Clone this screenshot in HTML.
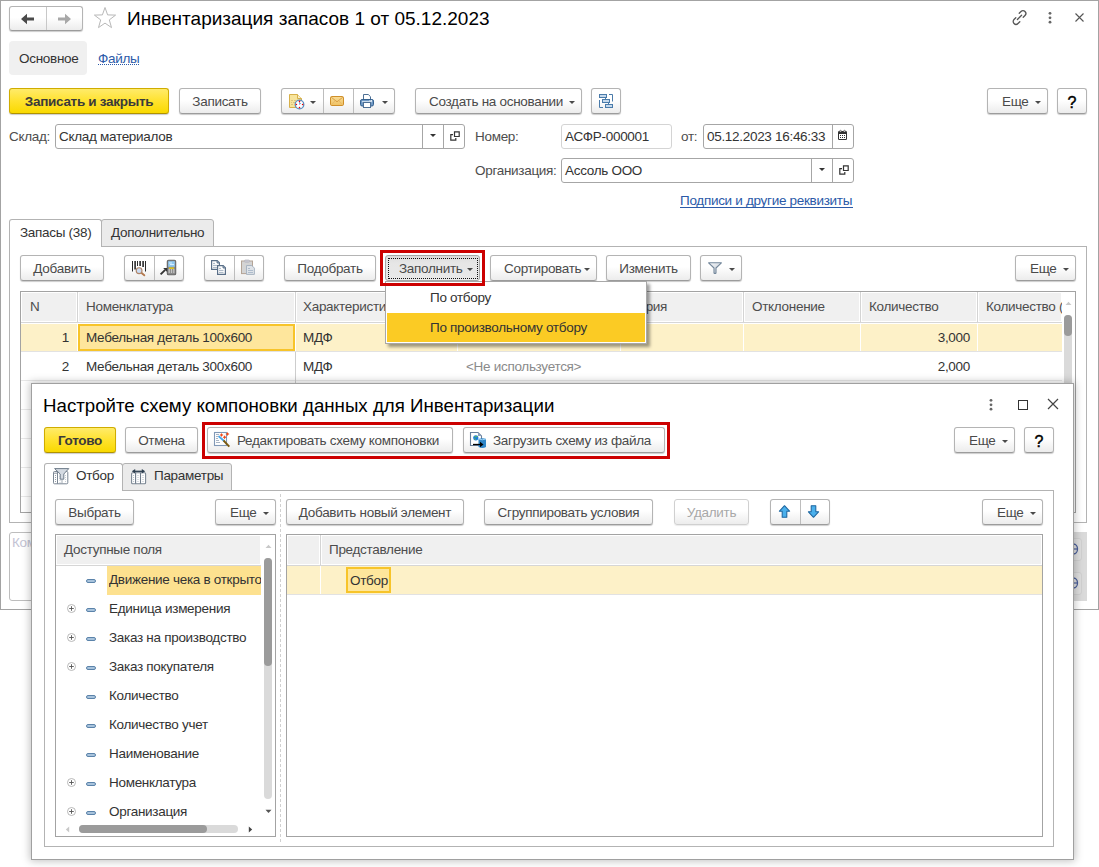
<!DOCTYPE html>
<html><head><meta charset="utf-8">
<style>
html,body{margin:0;padding:0}
body{width:1099px;height:867px;position:relative;overflow:hidden;background:#fff;font-family:"Liberation Sans",sans-serif;font-size:13.5px;letter-spacing:-0.3px;color:#4d4d4d}
.a{position:absolute}
svg.a{overflow:visible}
.t{position:absolute;white-space:nowrap;line-height:16px}
.btn{position:absolute;box-sizing:border-box;height:26px;border:1px solid #b4b4b4;border-bottom-color:#9c9c9c;border-radius:3px;background:linear-gradient(#fff 0%,#fff 45%,#ececec 100%);box-shadow:0 1px 1px rgba(0,0,0,.2);color:#4a4a4a;white-space:nowrap;line-height:25px;text-align:center}
.btn.y{background:linear-gradient(#ffeb6a 0%,#ffe22e 50%,#f9d900 100%);border-color:#cfac00;border-bottom-color:#b09200;color:#3a3a3a;font-weight:bold;letter-spacing:-0.3px}
.btn.dis{color:#a8a8a8}
.btn.l{text-align:left}
.dd{position:absolute;top:12px;width:0;height:0;border-left:3px solid transparent;border-right:3px solid transparent;border-top:3.5px solid #4a4a4a}
.sep{position:absolute;top:0;bottom:0;width:1px;background:#bdbdbd}
.inp{position:absolute;box-sizing:border-box;height:25px;border:1px solid #a6a6a6;border-radius:3px;background:#fff;color:#333;line-height:23px;white-space:nowrap}
.isep{position:absolute;top:0;bottom:0;width:1px;background:#a6a6a6}
.vl{position:absolute;width:1px}
.hl{position:absolute;height:1px}
.redbox{position:absolute;box-sizing:border-box;border:3px solid #cc0000}
.dash{width:10px;height:4px;box-sizing:border-box;border:1px solid #5b83aa;border-radius:2px;background:#a8c3dc}
</style></head><body>

<!-- OUTER WINDOW -->
<div class="a" style="left:0;top:0;width:1099px;height:610px;box-sizing:border-box;border:1px solid #a3a3a3"></div>

<!-- nav buttons -->
<div class="btn" style="left:9px;top:6px;width:74px;height:25px"><div class="sep" style="left:36px;background:#c8c8c8"></div></div>
<svg class="a" style="left:20px;top:13px" width="16" height="12" viewBox="0 0 16 12"><path d="M1 6 L7 0.7 V4.6 H14 V7.4 H7 V11.3 Z" fill="#4a4a4a"/></svg>
<svg class="a" style="left:56px;top:13px" width="16" height="12" viewBox="0 0 16 12"><path d="M15 6 L9 0.7 V4.6 H2 V7.4 H9 V11.3 Z" fill="#a8a8a8"/></svg>
<!-- star -->
<svg class="a" style="left:93px;top:6px" width="24" height="24" viewBox="0 0 24 24"><path d="M12 1.5 L14.6 8.9 L22.6 9.1 L16.3 13.9 L18.5 21.6 L12 17.1 L5.5 21.6 L7.7 13.9 L1.4 9.1 L9.4 8.9 Z" fill="none" stroke="#b8b8b8" stroke-width="1"/></svg>
<div class="t" style="left:127px;top:7.5px;font-size:19px;line-height:22px;color:#000;letter-spacing:0">Инвентаризация запасов 1 от 05.12.2023</div>
<!-- link icon -->
<svg class="a" style="left:1011px;top:9px" width="18" height="17" viewBox="0 0 18 17"><g fill="none" stroke="#555" stroke-width="1.3" stroke-linecap="round"><path d="M6.4 10.5 L10.6 6.3"/><path d="M8.2 4.3 L10 2.5 A2.8 2.8 0 0 1 14 6.5 L12.2 8.3"/><path d="M8.8 12.7 L7 14.5 A2.8 2.8 0 0 1 3 10.5 L4.8 8.7"/></g></svg>
<svg class="a" style="left:1047px;top:11px" width="6" height="13" viewBox="0 0 6 13"><circle cx="3" cy="2.3" r="1.4" fill="#666"/><circle cx="3" cy="6.8" r="1.4" fill="#666"/><circle cx="3" cy="11.2" r="1.4" fill="#666"/></svg>
<svg class="a" style="left:1074px;top:12px" width="11" height="11" viewBox="0 0 11 11"><path d="M1.5 1.5 L9.5 9.5 M9.5 1.5 L1.5 9.5" stroke="#555" stroke-width="1.1"/></svg>

<!-- Section tabs -->
<div class="a" style="left:9px;top:41px;width:78px;height:34px;background:#f0f0f0;border-radius:4px"></div>
<div class="t" style="left:19px;top:51px;color:#333">Основное</div>
<div class="t" style="left:98px;top:50.5px;color:#2b5aa8">Файлы</div>
<div class="a" style="left:98px;top:64px;width:41px;height:0;border-top:1px dotted #2b5aa8"></div>

<!-- Command bar -->
<div class="btn y" style="left:9px;top:88px;width:160px">Записать и закрыть</div>
<div class="btn" style="left:179px;top:88px;width:82px">Записать</div>
<div class="btn" style="left:281px;top:88px;width:114px"><div class="sep" style="left:41px"></div><div class="sep" style="left:71px"></div>
 <div class="dd" style="left:28px"></div><div class="dd" style="left:100px"></div></div>
<!-- doc+clock icon -->
<svg class="a" style="left:289px;top:94px" width="16" height="16" viewBox="0 0 16 16">
 <path d="M0.5 0.5 H8.5 L12.5 4.5 V13.5 H0.5 Z" fill="#f7e49c" stroke="#d7b04a"/>
 <path d="M8.5 0.5 V4.5 H12.5" fill="#fbf0c8" stroke="#d7b04a"/>
 <path d="M2 6.5 H4 M5 6.5 H7 M2 8.5 H3 M4 8.5 H6 M2 10.5 H4" stroke="#dcc47e"/>
 <circle cx="10.5" cy="10.5" r="4.3" fill="#fff" stroke="#5b8fc0" stroke-width="1.3"/>
 <path d="M10.5 10.5 V8 M10.5 10.5 L12 9" stroke="#7aa6d6" stroke-width="0.9"/>
 <circle cx="10.5" cy="7.4" r="0.8" fill="#e00"/><circle cx="10.5" cy="13.6" r="0.8" fill="#e00"/><circle cx="7.4" cy="10.5" r="0.8" fill="#e00"/><circle cx="13.6" cy="10.5" r="0.8" fill="#e00"/>
</svg>
<!-- envelope -->
<svg class="a" style="left:330px;top:96px" width="14" height="10" viewBox="0 0 14 10"><defs><linearGradient id="env" x1="0" y1="0" x2="0" y2="1"><stop offset="0" stop-color="#f9dc96"/><stop offset="1" stop-color="#f0c263"/></linearGradient></defs>
 <rect x="0.5" y="0.5" width="13" height="9" rx="1.2" fill="url(#env)" stroke="#cf8f2a"/><path d="M1.2 1.2 L7 5.8 L12.8 1.2" fill="none" stroke="#d59a3c" stroke-width="0.9"/><path d="M1.5 8.8 L5.3 4.6 M12.5 8.8 L8.7 4.6" stroke="#e6b565" stroke-width="0.8"/></svg>
<!-- printer -->
<svg class="a" style="left:360px;top:94px" width="15" height="15" viewBox="0 0 15 15">
 <path d="M3.5 0.5 H8.3 L10.5 2.7 V6 H3.5 Z" fill="#fff" stroke="#4d6f94"/>
 <rect x="0.5" y="5.5" width="13" height="6.5" rx="1.6" fill="#6f98c4" stroke="#34618f"/>
 <rect x="2" y="7" width="10" height="1.2" fill="#c9daea"/>
 <rect x="3.5" y="8.5" width="7" height="5" fill="#fff" stroke="#4d6f94"/>
 <rect x="9.5" y="6.2" width="1" height="1" fill="#fff"/><rect x="11" y="6.2" width="1" height="1" fill="#fff"/>
</svg>
<div class="btn l" style="left:415px;top:88px;width:167px;padding-left:13px">Создать на основании<div class="dd" style="left:153px"></div></div>
<div class="btn" style="left:591px;top:88px;width:30px"></div>
<svg class="a" style="left:599px;top:94px" width="14" height="14" viewBox="0 0 14 14"><g stroke="#4a7baa" stroke-width="1" fill="#c6d9ec">
 <rect x="0.5" y="0.5" width="7" height="3"/><rect x="3.5" y="5.5" width="7" height="3"/><rect x="6.5" y="10.5" width="7" height="3"/></g>
 <g stroke="#4a7baa" stroke-width="1" fill="none"><path d="M6.5 4 V5 M9.5 9 V10"/><path d="M10 0.5 H13.5 V7.5"/><path d="M0.5 6 V13.5 H4"/></g></svg>
<div class="btn l" style="left:987px;top:88px;width:61px;padding-left:14px">Еще<div class="dd" style="left:47px"></div></div>
<div class="btn" style="left:1057px;top:88px;width:30px;color:#000;font-size:16px;line-height:27px;letter-spacing:0;-webkit-text-stroke:0.45px #000">?</div>

<!-- Form fields -->
<div class="t" style="left:9px;top:128.5px">Склад:</div>
<div class="inp" style="left:55px;top:124px;width:410px"><span class="t" style="left:3px;top:4px">Склад материалов</span><div class="isep" style="left:366px"></div><div class="isep" style="left:387px"></div>
 <div class="dd" style="left:374px;top:9px;border-top-color:#333"></div>
 <svg class="a" style="left:394px;top:6px" width="10" height="10" viewBox="0 0 10 10"><path d="M4.5 0.8 H9.2 V5.5 H4.5 Z" fill="none" stroke="#333" stroke-width="1.2"/><path d="M3 3.6 H0.8 V9.2 H5.8 V7" fill="none" stroke="#333" stroke-width="1.2"/></svg>
</div>
<div class="t" style="left:475px;top:128.5px">Номер:</div>
<div class="inp" style="left:561px;top:124px;width:111px;border-color:#d4d4d4"><span class="t" style="left:3px;top:4px">АСФР-000001</span></div>
<div class="t" style="left:681px;top:128.5px">от:</div>
<div class="inp" style="left:703px;top:124px;width:151px"><span class="t" style="left:3px;top:4px">05.12.2023 16:46:33</span><div class="isep" style="left:128px"></div>
 <svg class="a" style="left:134px;top:5px" width="9" height="10" viewBox="0 0 9 10"><rect x="0" y="1" width="9" height="9" rx="1.3" fill="#333"/><rect x="1" y="4" width="7" height="5" fill="#fff"/>
 <g fill="#333"><rect x="2" y="5" width="1" height="1"/><rect x="4" y="5" width="1" height="1"/><rect x="6" y="5" width="1" height="1"/><rect x="2" y="7" width="1" height="1"/><rect x="4" y="7" width="1" height="1"/><rect x="6" y="7" width="1" height="1"/></g>
 <circle cx="2.5" cy="1.2" r="0.9" fill="#fff" stroke="#333" stroke-width="0.6"/><circle cx="6.5" cy="1.2" r="0.9" fill="#fff" stroke="#333" stroke-width="0.6"/></svg>
</div>
<div class="t" style="left:475px;top:162.5px">Организация:</div>
<div class="inp" style="left:561px;top:158px;width:293px"><span class="t" style="left:3px;top:4px">Ассоль ООО</span><div class="isep" style="left:249px"></div><div class="isep" style="left:270px"></div>
 <div class="dd" style="left:257px;top:9px;border-top-color:#333"></div>
 <svg class="a" style="left:277px;top:6px" width="10" height="10" viewBox="0 0 10 10"><path d="M4.5 0.8 H9.2 V5.5 H4.5 Z" fill="none" stroke="#333" stroke-width="1.2"/><path d="M3 3.6 H0.8 V9.2 H5.8 V7" fill="none" stroke="#333" stroke-width="1.2"/></svg>
</div>
<div class="t" style="left:680px;top:193px;color:#2b5aa8">Подписи и другие реквизиты</div>
<div class="a" style="left:680px;top:207px;width:173px;height:1px;background:#2b5aa8"></div>

<!-- MAIN TABS -->
<div class="a" style="left:9px;top:246px;width:1078px;height:277px;box-sizing:border-box;border:1px solid #b3b3b3"></div>
<div class="a" style="left:101px;top:219px;width:113px;height:28px;box-sizing:border-box;border:1px solid #b3b3b3;border-radius:3px 3px 0 0;background:#ebebeb"></div>
<div class="a" style="left:9px;top:219px;width:93px;height:28px;box-sizing:border-box;border:1px solid #b3b3b3;border-bottom:none;border-radius:3px 3px 0 0;background:#fff"></div>
<div class="t" style="left:20px;top:224.5px;color:#333">Запасы (38)</div>
<div class="t" style="left:111px;top:224.5px;color:#333">Дополнительно</div>

<!-- table toolbar -->
<div class="btn" style="left:20px;top:255px;width:84px">Добавить</div>
<div class="btn" style="left:124px;top:255px;width:60px"><div class="sep" style="left:29px"></div></div>
<!-- barcode icon -->
<svg class="a" style="left:128px;top:257px" width="22" height="22" viewBox="0 0 22 22">
 <g fill="#2a2a2a"><rect x="4" y="4" width="1" height="10.5"/><rect x="6.3" y="4" width="1.6" height="8.5"/><rect x="9" y="4" width="1" height="5"/><rect x="11.3" y="4" width="1.6" height="5"/><rect x="14.3" y="4" width="1.6" height="6"/><rect x="17" y="4" width="1" height="10.5"/></g>
 <path d="M13.3 15.8 L16.3 18.3" stroke="#b47a50" stroke-width="1.9" stroke-linecap="round"/>
 <circle cx="11.1" cy="13.7" r="2.9" fill="#c9dcf4" stroke="#b08466" stroke-width="1.1"/>
</svg>
<!-- scanner icon -->
<svg class="a" style="left:158px;top:257px" width="22" height="22" viewBox="0 0 22 22">
 <rect x="9.3" y="3.3" width="8.4" height="14.4" rx="1.3" fill="#8a8a8a" stroke="#666" stroke-width="1.1"/>
 <rect x="10.2" y="4.2" width="6.6" height="5.6" fill="#8ec8f0"/><path d="M11 6 H14 M12 7.5 H16" stroke="#eaf6ff" stroke-width="0.8"/>
 <rect x="11" y="10.5" width="5" height="1.3" fill="#f2d000"/>
 <g fill="#fff"><rect x="10.6" y="12.5" width="1.2" height="1"/><rect x="12.9" y="12.5" width="1.2" height="1"/><rect x="15.2" y="12.5" width="1.2" height="1"/><rect x="10.6" y="14.5" width="1.2" height="1"/><rect x="12.9" y="14.5" width="1.2" height="1"/><rect x="15.2" y="14.5" width="1.2" height="1"/></g>
 <path d="M2.6 17.4 L7.2 12.8" stroke="#333" stroke-width="1.9"/><path d="M5.2 11 H9.2 V15 Z" fill="#333"/>
</svg>
<div class="btn" style="left:204px;top:255px;width:60px"><div class="sep" style="left:29px"></div></div>
<!-- copy icon -->
<svg class="a" style="left:208px;top:257px" width="22" height="22" viewBox="0 0 22 22">
 <path d="M3.6 3.6 H9.2 L11.4 5.8 V12.4 H3.6 Z" fill="#fff" stroke="#5a6f88" stroke-width="1.2"/><path d="M9 3.6 V6 H11.4" fill="#8fa3ba" stroke="#5a6f88" stroke-width="0.9"/>
 <path d="M5 6.4 H7 M5 8.4 H9.5 M5 10.4 H9.5" stroke="#9aaabb" stroke-width="0.9"/>
 <path d="M9.6 8.6 H15.2 L17.4 10.8 V17.4 H9.6 Z" fill="#fff" stroke="#5a6f88" stroke-width="1.2"/><path d="M15 8.6 V11 H17.4" fill="#8fa3ba" stroke="#5a6f88" stroke-width="0.9"/>
 <path d="M11 11.4 H13 M11 13.4 H15.5 M11 15.4 H15.5" stroke="#9aaabb" stroke-width="0.9"/>
</svg>
<!-- paste disabled -->
<svg class="a" style="left:238px;top:257px" width="22" height="22" viewBox="0 0 22 22">
 <rect x="3.5" y="4" width="11" height="12.6" fill="#d4d4d4" stroke="#b4a496" stroke-width="1"/><rect x="6.5" y="3" width="5" height="2.2" rx="0.8" fill="#c8c8d0" stroke="#b8b8c0" stroke-width="0.8"/>
 <path d="M8.5 8.5 H13.8 L16.4 11.1 V17.4 H8.5 Z" fill="#dfe3e8" stroke="#a8b4c2" stroke-width="1"/>
 <path d="M10 11.5 H12 M10 13.5 H15 M10 15.5 H15" stroke="#a8b8c8" stroke-width="0.9"/>
</svg>
<div class="btn" style="left:284px;top:255px;width:92px">Подобрать</div>
<div class="btn l" style="left:385px;top:255px;width:95px;padding-left:13px;background:linear-gradient(#dcdcdc 0%,#e6e6e6 30%,#e9e9e9 100%);border-color:#a8a8a8;box-shadow:none">Заполнить<div class="dd" style="left:81px"></div><div class="a" style="left:2px;top:2px;width:90px;height:21px;box-sizing:border-box;border:1px dotted #111"></div></div>
<div class="btn l" style="left:490px;top:255px;width:107px;padding-left:13px">Сортировать<div class="dd" style="left:93px"></div></div>
<div class="btn" style="left:606px;top:255px;width:85px">Изменить</div>
<div class="btn" style="left:700px;top:255px;width:42px"><div class="dd" style="left:28px"></div></div>
<svg class="a" style="left:708px;top:262px" width="14" height="12" viewBox="0 0 14 12"><defs><linearGradient id="fun" x1="0" y1="0" x2="1" y2="1"><stop offset="0" stop-color="#f4f6f8"/><stop offset="1" stop-color="#c5ccd6"/></linearGradient></defs>
 <path d="M0.6 0.8 H13.4 L8 6 V11 Q7 11.8 6 11 V6 Z" fill="url(#fun)" stroke="#73879b" stroke-width="1.1" stroke-linejoin="round"/></svg>
<div class="btn l" style="left:1015px;top:255px;width:61px;padding-left:14px">Еще<div class="dd" style="left:47px"></div></div>

<!-- main table -->
<div class="a" style="left:20px;top:291px;width:1056px;height:222px;box-sizing:border-box;border:1px solid #a3a3a3;background:#fff;overflow:hidden">
  <div class="a" style="left:0;top:0;width:1041px;height:30px;background:#f0f0f0"></div>
  <div class="hl" style="left:0;top:30px;width:1041px;background:#d6d6d6"></div>
  <div class="hl" style="left:0;top:0;width:1041px;background:#fff"></div>
  <div class="hl" style="left:0;top:29px;width:1041px;background:#fff"></div>
  <div class="vl" style="left:0;top:0;height:30px;background:#fff"></div>
  <div class="vl" style="left:1040px;top:0;height:30px;background:#fff"></div>
  <div class="vl" style="left:55px;top:0;height:30px;background:#fff"></div><div class="vl" style="left:57px;top:0;height:30px;background:#fff"></div>
  <div class="vl" style="left:273px;top:0;height:30px;background:#fff"></div><div class="vl" style="left:275px;top:0;height:30px;background:#fff"></div>
  <div class="vl" style="left:435px;top:0;height:30px;background:#fff"></div><div class="vl" style="left:437px;top:0;height:30px;background:#fff"></div>
  <div class="vl" style="left:598px;top:0;height:30px;background:#fff"></div><div class="vl" style="left:600px;top:0;height:30px;background:#fff"></div>
  <div class="vl" style="left:721px;top:0;height:30px;background:#fff"></div><div class="vl" style="left:723px;top:0;height:30px;background:#fff"></div>
  <div class="vl" style="left:838px;top:0;height:30px;background:#fff"></div><div class="vl" style="left:840px;top:0;height:30px;background:#fff"></div>
  <div class="vl" style="left:955px;top:0;height:30px;background:#fff"></div><div class="vl" style="left:957px;top:0;height:30px;background:#fff"></div>
  <div class="a" style="left:0;top:32px;width:1041px;height:27px;background:#fdf1c8"></div>
  <div class="hl" style="left:0;top:59px;width:1041px;background:#e2e2e2"></div>
  <div class="hl" style="left:0;top:88px;width:1041px;background:#e8e8e8"></div>
  <div class="hl" style="left:0;top:117px;width:1041px;background:#e8e8e8"></div>
  <div class="hl" style="left:0;top:146px;width:1041px;background:#e8e8e8"></div>
  <div class="hl" style="left:0;top:175px;width:1041px;background:#e8e8e8"></div>
  <div class="hl" style="left:0;top:204px;width:1041px;background:#e8e8e8"></div>
  <!-- header col dividers (gray) -->
  <div class="vl" style="left:56px;top:0;height:30px;background:#d4d4d4"></div>
  <div class="vl" style="left:274px;top:0;height:30px;background:#d4d4d4"></div>
  <div class="vl" style="left:436px;top:0;height:30px;background:#d4d4d4"></div>
  <div class="vl" style="left:599px;top:0;height:30px;background:#d4d4d4"></div>
  <div class="vl" style="left:722px;top:0;height:30px;background:#d4d4d4"></div>
  <div class="vl" style="left:839px;top:0;height:30px;background:#d4d4d4"></div>
  <div class="vl" style="left:956px;top:0;height:30px;background:#d4d4d4"></div>
  <!-- body col dividers -->
  <div class="vl" style="left:56px;top:31px;height:28px;background:#fff"></div>
  <div class="vl" style="left:274px;top:31px;height:28px;background:#fff"></div>
  <div class="vl" style="left:436px;top:31px;height:28px;background:#fff"></div>
  <div class="vl" style="left:599px;top:31px;height:28px;background:#fff"></div>
  <div class="vl" style="left:722px;top:31px;height:28px;background:#fff"></div>
  <div class="vl" style="left:839px;top:31px;height:28px;background:#fff"></div>
  <div class="vl" style="left:956px;top:31px;height:28px;background:#fff"></div>
  <div class="vl" style="left:274px;top:60px;height:160px;background:#cdcdcd"></div>
  <!-- focused cell -->
  <div class="a" style="left:57px;top:32px;width:217px;height:27px;box-sizing:border-box;border:2px solid #f7c42a;background:#fee69c"></div>
  <div class="t" style="left:9px;top:7px">N</div>
  <div class="t" style="left:65px;top:7px">Номенклатура</div>
  <div class="t" style="left:282px;top:7px">Характеристика</div>
  <div class="t" style="left:608px;top:7px">Серия</div>
  <div class="t" style="left:731px;top:7px">Отклонение</div>
  <div class="t" style="left:848px;top:7px">Количество</div>
  <div class="t" style="left:965px;top:7px">Количество (учет)</div>
  <div class="t" style="left:0;width:48px;text-align:right;top:38px;color:#333">1</div>
  <div class="t" style="left:65px;top:38px;color:#333">Мебельная деталь 100x600</div>
  <div class="t" style="left:282px;top:38px;color:#333">МДФ</div>
  <div class="t" style="left:0;width:949px;text-align:right;top:38px;color:#333">3,000</div>
  <div class="t" style="left:0;width:48px;text-align:right;top:67px;color:#333">2</div>
  <div class="t" style="left:65px;top:67px;color:#333">Мебельная деталь 300x600</div>
  <div class="t" style="left:282px;top:67px;color:#333">МДФ</div>
  <div class="t" style="left:445px;top:67px;color:#8a8a8a">&lt;Не используется&gt;</div>
  <div class="t" style="left:0;width:949px;text-align:right;top:67px;color:#333">2,000</div>
  <!-- scrollbar -->
  <div class="a" style="left:1041px;top:0;width:14px;height:220px;background:#fff"></div>
  <svg class="a" style="left:1044px;top:9px" width="7" height="5" viewBox="0 0 7 5"><path d="M0.5 4 L3.5 0.8 L6.5 4 Z" fill="#c8c8c8"/></svg>
  <div class="a" style="left:1043px;top:23px;width:8px;height:198px;background:#dadada;border-radius:4px"></div>
  <div class="a" style="left:1043px;top:23px;width:8px;height:21px;background:#9b9b9b;border-radius:4px"></div>
</div>
<!-- comment field and misc bottom -->
<div class="a" style="left:9px;top:532px;width:1078px;height:69px;box-sizing:border-box;border:1px solid #bdbdbd;border-radius:3px"></div>
<div class="t" style="left:12px;top:534.5px;color:#c3c3d3">Комментарий</div>
<div class="a" style="left:1060px;top:532px;width:27px;height:69px;background:#dadada"></div>
<div class="a" style="left:1062px;top:538px;width:20px;height:23px;box-sizing:border-box;border:1px solid #d0d0d0;border-radius:3px;background:#dedede"></div>
<div class="a" style="left:1062px;top:572px;width:20px;height:23px;box-sizing:border-box;border:1px solid #d0d0d0;border-radius:3px;background:#dedede"></div>
<svg class="a" style="left:1068px;top:543px" width="11" height="12" viewBox="0 0 11 12"><ellipse cx="5.5" cy="6" rx="4" ry="5" fill="none" stroke="#4a5f9a" stroke-width="1.3"/><path d="M1.5 6 H9.5" stroke="#4a5f9a" stroke-width="1.2"/></svg>
<svg class="a" style="left:1068px;top:577px" width="11" height="12" viewBox="0 0 11 12"><ellipse cx="5.5" cy="6" rx="4" ry="5" fill="none" stroke="#4a5f9a" stroke-width="1.3"/><path d="M1.5 6 H9.5" stroke="#4a5f9a" stroke-width="1.2"/></svg>

<!-- dropdown menu -->
<div class="a" style="left:385px;top:281px;width:262px;height:63px;box-sizing:border-box;border:1px solid #a8a8a8;background:#fff;box-shadow:3px 3px 3px rgba(0,0,0,.38)">
  <div class="a" style="left:1px;top:31px;width:258px;height:29px;background:#fbcb24"></div>
  <div class="t" style="left:44px;top:7.5px;color:#333">По отбору</div>
  <div class="t" style="left:44px;top:37.5px;color:#333">По произвольному отбору</div>
</div>
<div class="redbox" style="left:380px;top:250px;width:105px;height:36px"></div>

<!-- DIALOG -->
<div class="a" style="left:31px;top:383px;width:1043px;height:477px;box-sizing:border-box;border:1px solid #a0a0a0;background:#fff;box-shadow:0 0 8px 1px rgba(0,0,0,.25)"></div>
<div class="t" style="left:43px;top:394.5px;font-size:18.7px;line-height:22px;color:#000;letter-spacing:0">Настройте схему компоновки данных для Инвентаризации</div>
<svg class="a" style="left:988px;top:398px" width="6" height="13" viewBox="0 0 6 13"><circle cx="3" cy="2.3" r="1.4" fill="#666"/><circle cx="3" cy="6.8" r="1.4" fill="#666"/><circle cx="3" cy="11.2" r="1.4" fill="#666"/></svg>
<div class="a" style="left:1018px;top:400px;width:10px;height:10px;box-sizing:border-box;border:1.5px solid #333"></div>
<svg class="a" style="left:1047px;top:398px" width="12" height="12" viewBox="0 0 12 12"><path d="M1 1 L11 11 M11 1 L1 11" stroke="#444" stroke-width="1.2"/></svg>

<div class="btn y" style="left:44px;top:427px;width:72px">Готово</div>
<div class="btn" style="left:125px;top:427px;width:73px">Отмена</div>
<div class="btn l" style="left:207px;top:427px;width:246px;padding-left:29px">Редактировать схему компоновки</div>
<svg class="a" style="left:214px;top:432px" width="16" height="16" viewBox="0 0 16 16">
 <rect x="0.5" y="0.5" width="12" height="13" fill="#fff" stroke="#8098b6" stroke-width="1.1"/>
 <path d="M2 2.5 H5 M2 4.5 H4 M2 6.5 H4 M2 8.5 H5 M2 10.5 H6" stroke="#a8b4c4"/>
 <path d="M5 4.5 L9.5 8.5" stroke="#4aa8ea" stroke-width="1.8" stroke-linecap="round"/>
 <path d="M9.5 8.5 L15.3 14.6" stroke="#7a5a10" stroke-width="1.9"/>
 <g fill="#f04a1a" transform="translate(-1,0)"><path d="M8.5 1 L9.2 2.3 L10.5 3 L9.2 3.7 L8.5 5 L7.8 3.7 L6.5 3 L7.8 2.3 Z"/><path d="M11.6 3.2 L12.3 4.5 L13.6 5.2 L12.3 5.9 L11.6 7.2 L10.9 5.9 L9.6 5.2 L10.9 4.5 Z"/><path d="M14.5 0 L15.2 1.3 L16.5 2 L15.2 2.7 L14.5 4 L13.8 2.7 L12.5 2 L13.8 1.3 Z"/></g>
</svg>
<div class="btn l" style="left:463px;top:427px;width:202px;padding-left:29px">Загрузить схему из файла</div>
<svg class="a" style="left:470px;top:432px" width="17" height="17" viewBox="0 0 17 17">
 <path d="M0.5 0.5 H8 L11.5 4 V13.5 H0.5 Z" fill="#fff" stroke="#6a7f9a" stroke-width="1.1"/>
 <path d="M8 0.5 V4 H11.5 Z" fill="#8aa0bc"/>
 <circle cx="5.8" cy="5.8" r="2.6" fill="#1a7be0"/><path d="M4.5 4.5 Q6 5.5 7.5 4.3 M4.3 6.5 Q5.5 7 6 8" stroke="#6acb3a" stroke-width="0.9" fill="none"/>
 <path d="M8.5 7 Q12.5 5.5 16 7 V15 Q12.5 16.8 8.5 15 Z" fill="#2f86c8"/><path d="M8.5 7 Q12.5 8.5 16 7" stroke="#9ad0f4" fill="none"/>
 <path d="M3 12.5 H10.5" stroke="#000" stroke-width="1.3"/><path d="M10 9.8 L13.5 12.5 L10 15.2 Z" fill="#000"/>
</svg>
<div class="redbox" style="left:202px;top:422px;width:468px;height:37px"></div>
<div class="btn l" style="left:954px;top:427px;width:61px;padding-left:14px">Еще<div class="dd" style="left:47px"></div></div>
<div class="btn" style="left:1024px;top:427px;width:30px;color:#000;font-size:16px;line-height:27px;letter-spacing:0;-webkit-text-stroke:0.45px #000">?</div>

<!-- dialog tabs -->
<div class="a" style="left:44px;top:490px;width:1010px;height:357px;box-sizing:border-box;border:1px solid #b3b3b3"></div>
<div class="a" style="left:122px;top:463px;width:110px;height:28px;box-sizing:border-box;border:1px solid #b3b3b3;border-radius:3px 3px 0 0;background:#ebebeb"></div>
<div class="a" style="left:44px;top:463px;width:79px;height:28px;box-sizing:border-box;border:1px solid #b3b3b3;border-bottom:none;border-radius:3px 3px 0 0;background:#fff"></div>
<svg class="a" style="left:52px;top:467px" width="18" height="18" viewBox="0 0 18 18">
 <rect x="1.5" y="4.5" width="14.3" height="12.3" rx="1" fill="#fff" stroke="#7b8794" stroke-width="1"/>
 <path d="M1.5 6.2 H5.5" stroke="#7b8794" stroke-width="0.9"/>
 <path d="M5.5 4.5 V16.8" stroke="#7b8794" stroke-width="1"/>
 <path d="M3.5 8 V16" stroke="#8c96a0" stroke-width="0.9" stroke-dasharray="1 1"/>
 <path d="M13.5 8 V16 M8 9 V16" stroke="#c0c8d0" stroke-width="0.9" stroke-dasharray="1 1"/>
 <path d="M2.6 1.6 H16.8 L11.8 7 V12.2 H8.2 V7 Z" fill="#d4dae2" stroke="#6f7c8a" stroke-width="1" stroke-linejoin="round"/>
 <path d="M10 12.5 V16.5" stroke="#9aa4ae" stroke-width="0.9"/>
</svg>
<div class="t" style="left:76px;top:468px;color:#333">Отбор</div>
<svg class="a" style="left:130px;top:467px" width="18" height="18" viewBox="0 0 18 18">
 <rect x="1.6" y="5.8" width="14" height="11" rx="1" fill="#fff" stroke="#7b8794" stroke-width="1.1"/>
 <path d="M5.6 5.8 V16.8 M10.5 5.8 V16.8" stroke="#6f7c8a" stroke-width="1.1"/>
 <path d="M3.6 8 V16 M8 8 V16 M13 8 V16" stroke="#a8b2bc" stroke-width="0.9" stroke-dasharray="1 1"/>
 <path d="M4.5 4.3 H12.5" stroke="#2d3f50" stroke-width="1.3"/><path d="M1.8 4.3 L5.2 2 V6.6 Z M15.2 4.3 L11.8 2 V6.6 Z" fill="#2d3f50"/>
</svg>
<div class="t" style="left:154px;top:468px;color:#333">Параметры</div>

<div class="btn" style="left:55px;top:499px;width:79px">Выбрать</div>
<div class="btn l" style="left:215px;top:499px;width:61px;padding-left:14px">Еще<div class="dd" style="left:47px"></div></div>
<div class="a" style="left:280px;top:494px;width:0;height:348px;border-left:1px dashed #d0d0d0"></div>
<div class="btn" style="left:286px;top:499px;width:178px">Добавить новый элемент</div>
<div class="btn" style="left:484px;top:499px;width:169px">Сгруппировать условия</div>
<div class="btn dis" style="left:674px;top:499px;width:75px;box-shadow:0 1px 1px rgba(0,0,0,.08);border-color:#d0d0d0">Удалить</div>
<div class="btn" style="left:770px;top:499px;width:60px"><div class="sep" style="left:29px"></div></div>
<svg class="a" style="left:779px;top:505px" width="12" height="13" viewBox="0 0 12 13"><path d="M5.5 0.7 L10.6 6.2 H7.8 V12.3 H3.2 V6.2 H0.4 Z" fill="#4ab0ec" stroke="#1d66a0" stroke-width="1.05" stroke-linejoin="round"/></svg>
<svg class="a" style="left:808px;top:505px" width="12" height="13" viewBox="0 0 12 13"><path d="M5.5 12.3 L10.6 6.8 H7.8 V0.7 H3.2 V6.8 H0.4 Z" fill="#4ab0ec" stroke="#1d66a0" stroke-width="1.05" stroke-linejoin="round"/></svg>
<div class="btn l" style="left:982px;top:499px;width:61px;padding-left:14px">Еще<div class="dd" style="left:47px"></div></div>

<!-- left tree -->
<div class="a" style="left:55px;top:534px;width:221px;height:303px;box-sizing:border-box;border:1px solid #a3a3a3;background:#fff;overflow:hidden">
  <div class="a" style="left:0;top:0;width:205px;height:30px;box-sizing:border-box;border:1px solid #fff;background:#f0f0f0"></div>
  <div class="hl" style="left:0;top:30px;width:205px;background:#d6d6d6"></div>
  <div class="t" style="left:8px;top:7px">Доступные поля</div>
  <div class="a" style="left:51px;top:31px;width:154px;height:29px;background:#fde18f"></div>
  <div class="t" style="left:53px;top:37px;width:152px;overflow:hidden;color:#333">Движение чека в открыто</div>
  <div class="t" style="left:53px;top:66px;color:#333">Единица измерения</div>
  <div class="t" style="left:53px;top:95px;color:#333">Заказ на производство</div>
  <div class="t" style="left:53px;top:124px;color:#333">Заказ покупателя</div>
  <div class="t" style="left:53px;top:153px;color:#333">Количество</div>
  <div class="t" style="left:53px;top:182px;color:#333">Количество учет</div>
  <div class="t" style="left:53px;top:211px;color:#333">Наименование</div>
  <div class="t" style="left:53px;top:240px;color:#333">Номенклатура</div>
  <div class="t" style="left:53px;top:269px;color:#333">Организация</div>
  <!-- dash icons -->
  <div class="a dash" style="left:30px;top:44px"></div>
  <div class="a dash" style="left:30px;top:73px"></div>
  <div class="a dash" style="left:30px;top:102px"></div>
  <div class="a dash" style="left:30px;top:131px"></div>
  <div class="a dash" style="left:30px;top:160px"></div>
  <div class="a dash" style="left:30px;top:189px"></div>
  <div class="a dash" style="left:30px;top:218px"></div>
  <div class="a dash" style="left:30px;top:247px"></div>
  <div class="a dash" style="left:30px;top:276px"></div>
  <svg class="a" style="left:11px;top:69px" width="9" height="9" viewBox="0 0 9 9"><use href="#plus"/></svg>
  <svg class="a" style="left:11px;top:98px" width="9" height="9" viewBox="0 0 9 9"><use href="#plus"/></svg>
  <svg class="a" style="left:11px;top:127px" width="9" height="9" viewBox="0 0 9 9"><use href="#plus"/></svg>
  <svg class="a" style="left:11px;top:243px" width="9" height="9" viewBox="0 0 9 9"><use href="#plus"/></svg>
  <svg class="a" style="left:11px;top:272px" width="9" height="9" viewBox="0 0 9 9"><use href="#plus"/></svg>
  <!-- vertical scroll -->
  <div class="a" style="left:207px;top:0;width:13px;height:301px;background:#fff"></div>
  <svg class="a" style="left:209px;top:9px" width="7" height="5" viewBox="0 0 7 5"><path d="M0.5 4 L3.5 0.8 L6.5 4 Z" fill="#c8c8c8"/></svg>
  <div class="a" style="left:208px;top:23px;width:8px;height:241px;background:#dadada;border-radius:4px"></div>
  <div class="a" style="left:208px;top:23px;width:8px;height:108px;background:#9b9b9b;border-radius:4px"></div>
  <svg class="a" style="left:209px;top:274px" width="7" height="5" viewBox="0 0 7 5"><path d="M0.5 0.8 L3.5 4 L6.5 0.8 Z" fill="#555"/></svg>
  <!-- horizontal scroll -->
  <svg class="a" style="left:9px;top:291px" width="5" height="7" viewBox="0 0 5 7"><path d="M4.2 0.5 L0.8 3.5 L4.2 6.5 Z" fill="#c8c8c8"/></svg>
  <div class="a" style="left:23px;top:290px;width:159px;height:8px;background:#dadada;border-radius:4px"></div>
  <div class="a" style="left:23px;top:290px;width:128px;height:8px;background:#9b9b9b;border-radius:4px"></div>
  <svg class="a" style="left:192px;top:291px" width="5" height="7" viewBox="0 0 5 7"><path d="M0.8 0.5 L4.2 3.5 L0.8 6.5 Z" fill="#444"/></svg>
</div>

<!-- right grid -->
<div class="a" style="left:286px;top:534px;width:757px;height:303px;box-sizing:border-box;border:1px solid #a3a3a3;background:#fff;overflow:hidden">
  <div class="a" style="left:0;top:0;width:755px;height:30px;box-sizing:border-box;border:1px solid #fff;background:#f0f0f0"></div>
  <div class="hl" style="left:0;top:30px;width:755px;background:#d6d6d6"></div>
  <div class="vl" style="left:33px;top:0;height:30px;background:#d4d4d4"></div><div class="vl" style="left:32px;top:0;height:30px;background:#fff"></div><div class="vl" style="left:34px;top:0;height:30px;background:#fff"></div>
  <div class="t" style="left:42px;top:7px">Представление</div>
  <div class="a" style="left:0;top:31px;width:755px;height:28px;background:#fdf1c8"></div>
  <div class="vl" style="left:33px;top:31px;height:28px;background:#fff"></div>
  <div class="hl" style="left:0;top:59px;width:755px;background:#e2e2e2"></div>
  <div class="a" style="left:59px;top:32px;width:45px;height:26px;box-sizing:border-box;border:2px solid #f7c42a;background:#fee69c"></div>
  <div class="t" style="left:63px;top:38px;color:#333">Отбор</div>
</div>

<svg width="0" height="0" style="position:absolute">
 <defs><g id="plus"><circle cx="4.5" cy="4.5" r="4" fill="#fff" stroke="#b0b0b0" stroke-width="0.9"/><path d="M4.5 2.2 V6.8 M2.2 4.5 H6.8" stroke="#555" stroke-width="0.9"/></g></defs>
</svg>
</body></html>
